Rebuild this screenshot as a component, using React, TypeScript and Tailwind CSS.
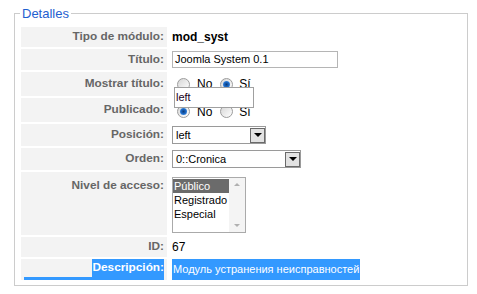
import React from "react";

const font = { fontFamily: '"Liberation Sans", Arial, sans-serif' };

const Radio = ({ checked }: { checked?: boolean }) => (
  <span className="flex h-[13px] w-[13px] items-center justify-center rounded-full border border-[#9c9c9c] bg-gradient-to-br from-[#d6d6d6] to-[#ffffff]">
    {checked && (
      <span className="h-[7px] w-[7px] rounded-full bg-[radial-gradient(circle,#0b3a78_0%,#1f6fcf_55%,#7fb6ec_100%)]" />
    )}
  </span>
);

const Arrow = () => (
  <span className="flex h-[15px] w-[15px] items-center justify-center border border-[#6a6a6a] bg-[#e2e2e2]">
    <span className="h-0 w-0 border-x-[4px] border-t-[4px] border-x-transparent border-t-black" />
  </span>
);

const Label = ({ children, top }: { children: React.ReactNode; top?: boolean }) => (
  <div
    className={`flex justify-end bg-[#f3f3f3] pr-[3px] text-[11.8px] font-bold text-[#666] ${
      top ? "items-start pt-[5px]" : "items-center"
    }`}
  >
    {children}
  </div>
);

export default function App() {
  return (
    <div className="h-[294px] w-[477px] bg-white" style={font}>
      <fieldset className="ml-[14px] mt-[6px] w-[454px] border border-[#cccccc] pl-[6px] pr-[6px] pt-[6px] pb-[5px]">
        <legend className="-ml-[1px] px-[2px] text-[13px] leading-[15px] text-[#1f5fd0]">Detalles</legend>
        <div className="relative grid grid-cols-[146px_1fr] grid-rows-[20px_21px_24px_24px_22px_22px_63px_20px_21px] gap-x-[5px] gap-y-[2px]">
          <Label>Tipo de módulo:</Label>
          <div className="flex items-center text-[12px] font-bold text-black">mod_syst</div>

          <Label>Título:</Label>
          <div className="flex items-center">
            <div className="flex h-[17px] w-[166px] items-center border border-[#b5b5b5] px-[2px] text-[11px] text-black">
              Joomla System 0.1
            </div>
          </div>

          <Label>Mostrar título:</Label>
          <div className="flex items-center pl-[5px] text-[12px] text-black">
            <Radio />
            <span className="ml-[7px]">No</span>
            <span className="ml-[8px]">
              <Radio checked />
            </span>
            <span className="ml-[6px]">Sí</span>
          </div>

          <Label>Publicado:</Label>
          <div className="flex items-center pl-[5px] pt-[3px] text-[12px] text-black">
            <Radio checked />
            <span className="ml-[7px]">No</span>
            <span className="ml-[8px]">
              <Radio />
            </span>
            <span className="ml-[6px]">Sí</span>
          </div>

          <Label>Posición:</Label>
          <div className="flex items-center">
            <div className="flex h-[18px] w-[94px] items-center justify-between border border-[#9a9a9a] pl-[3px] text-[11px] text-black">
              <span>left</span>
              <Arrow />
            </div>
          </div>

          <Label>Orden:</Label>
          <div className="flex items-center">
            <div className="flex h-[18px] w-[129px] items-center justify-between border border-[#9a9a9a] pl-[3px] text-[11px] text-black">
              <span>0::Cronica</span>
              <Arrow />
            </div>
          </div>

          <Label top>Nivel de acceso:</Label>
          <div className="pt-[5px]">
            <div className="flex h-[56px] w-[74px] border border-[#aaaaaa] text-[11px] leading-[14px] text-black">
              <div className="flex-1 pt-[1px]">
                <div className="bg-[#6b6b6b] pl-[1px] text-white">Público</div>
                <div className="pl-[1px]">Registrado</div>
                <div className="pl-[1px]">Especial</div>
              </div>
              <div className="flex w-[16px] flex-col items-center justify-between bg-[#f4f4f4] py-[5px]">
                <span className="h-0 w-0 border-x-[3px] border-b-[3px] border-x-transparent border-b-[#b0b0b0]" />
                <span className="h-0 w-0 border-x-[3px] border-t-[3px] border-x-transparent border-t-[#b0b0b0]" />
              </div>
            </div>
          </div>

          <Label>ID:</Label>
          <div className="flex items-center text-[12px] text-black">67</div>

          <div className="flex flex-col bg-[#f3f3f3] pl-[3px] pr-[3px] text-[11.8px] font-bold">
            <div className="flex justify-end">
              <span className="flex h-[18px] items-center bg-[#3399ff] pl-[1px] text-white">Descripción:</span>
            </div>
            <div className="h-[4px] bg-[#3399ff]" />
          </div>
          <div className="flex items-start">
            <span className="flex h-[21px] items-center bg-[#3399ff] pr-[1px] pl-[1px] text-[11px] text-white">
              Модуль устранения неисправностей
            </span>
          </div>

          <div className="absolute left-[153px] top-[60px] flex h-[21px] w-[80px] items-center border border-[#a0a0a0] bg-white pl-[1px] text-[11px] text-[#1a001a]">
            left
          </div>
        </div>
      </fieldset>
    </div>
  );
}
